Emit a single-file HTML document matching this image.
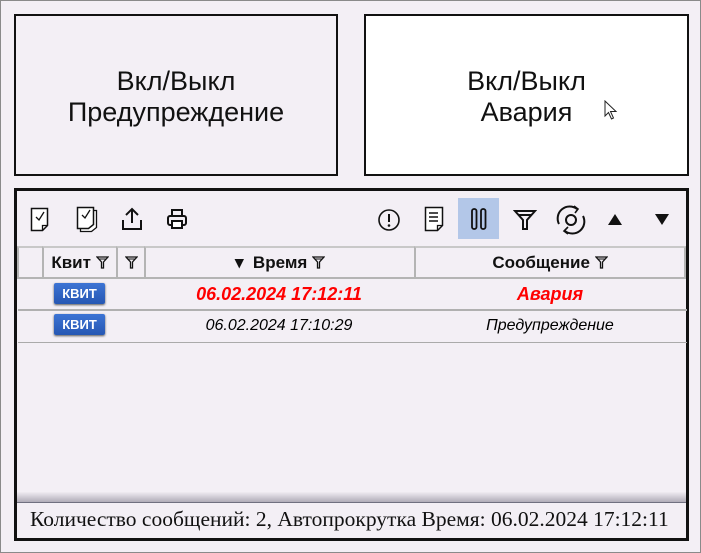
<!DOCTYPE html>
<html><head><meta charset="utf-8"><style>
*{box-sizing:border-box;margin:0;padding:0}
body{width:701px;height:553px;background:#f3eff5;position:relative;overflow:hidden;font-family:"Liberation Sans",sans-serif;border:1px solid #8a8a8a}
.btn{position:absolute;top:13px;height:162px;border:2px solid #111;display:flex;align-items:center;justify-content:center;text-align:center;font-size:27px;line-height:31px;color:#111;padding-top:4px}
#b1{left:13px;width:324px;background:#f3eff5}
#b2{left:363px;width:325px;background:#fff}
#panel{position:absolute;left:13px;top:187px;width:675px;height:353px;border:3px solid #111;background:#f3eff5}
.ic{position:absolute}
.hdr{position:absolute;top:55px;height:33px;border:2px solid #b4b4b4;border-top-color:#c8c8c8;background:#f3eff5;font-weight:bold;font-size:17px;display:flex;align-items:center;justify-content:center;color:#111}
.row{position:absolute;left:1px;width:669px;height:32px;border-bottom:2px solid #b0b0b0}
.kv{position:absolute;left:36px;width:51px;height:21px;background:linear-gradient(#3d74d4,#2657b3);border-radius:2px;color:#fff;font-size:13px;font-weight:bold;display:flex;align-items:center;justify-content:center;box-shadow:0 1px 2px #555}
.t{position:absolute;font-style:italic;font-size:18px;text-align:center}
</style></head><body>
<div class="btn" id="b1">Вкл/Выкл<br>Предупреждение</div>
<div class="btn" id="b2">Вкл/Выкл<br>Авария</div>
<svg style="position:absolute;left:603px;top:99px" width="14" height="20" viewBox="0 0 14 20"><path d="M1 1V16L4.5 12.5L7.5 19L9.5 18L6.5 11.5H12Z" fill="#fff" stroke="#222" stroke-width="1"/></svg>
<div id="panel">
<svg class="ic" style="left:13px;top:16px" width="20" height="26" viewBox="0 0 20 26"><path d="M1.5 1.5H17.5V18.5L12.5 23.5H1.5Z" fill="#fff" stroke="#111" stroke-width="1.5"/><path d="M12.5 23.5V18.5H17.5" fill="none" stroke="#111" stroke-width="1.3"/><path d="M6 10L9 13L14 5" fill="none" stroke="#111" stroke-width="1.3"/></svg>
<svg class="ic" style="left:59px;top:15px" width="24" height="27" viewBox="0 0 24 27"><path d="M4.5 4.5H20.5V21.5L15.5 25.5H4.5Z" fill="#fff" stroke="#111" stroke-width="1.3"/><path d="M1.5 1.5H17.5V18.5L12.5 22.5H1.5Z" fill="#fff" stroke="#111" stroke-width="1.5"/><path d="M6 9L9 12L14 4" fill="none" stroke="#111" stroke-width="1.3"/></svg>
<svg class="ic" style="left:104px;top:16px" width="22" height="24" viewBox="0 0 22 24"><path d="M11 2V16M5 8L11 2L17 8" fill="none" stroke="#111" stroke-width="2"/><path d="M2 13V22H20V13" fill="none" stroke="#111" stroke-width="2"/></svg>
<svg class="ic" style="left:149px;top:17px" width="22" height="22" viewBox="0 0 22 22"><rect x="6" y="2" width="10" height="6" fill="none" stroke="#111" stroke-width="2"/><rect x="2" y="8" width="18" height="9" rx="2" fill="none" stroke="#111" stroke-width="2"/><rect x="6" y="13" width="10" height="7" fill="#fff" stroke="#111" stroke-width="2"/></svg>
<svg class="ic" style="left:360px;top:17px" width="24" height="24" viewBox="0 0 24 24"><circle cx="12" cy="12" r="10" fill="none" stroke="#111" stroke-width="1.6"/><path d="M12 6V14" stroke="#111" stroke-width="2"/><circle cx="12" cy="17.5" r="1.3" fill="#111"/></svg>
<svg class="ic" style="left:407px;top:15px" width="22" height="27" viewBox="0 0 22 27"><path d="M1.5 1.5H18.5V19.5L13.5 24.5H1.5Z" fill="#fff" stroke="#111" stroke-width="1.5"/><path d="M13.5 24.5V19.5H18.5" fill="none" stroke="#111" stroke-width="1.3"/><path d="M5 7H14M5 11H14M5 15H14" stroke="#111" stroke-width="1.5"/></svg>
<div class="ic" style="left:441px;top:7px;width:41px;height:41px;background:#b3c7e8"></div>
<svg class="ic" style="left:453px;top:16px" width="18" height="24" viewBox="0 0 18 24"><rect x="2" y="2" width="4.5" height="20" rx="2" fill="none" stroke="#111" stroke-width="1.8"/><rect x="11" y="2" width="4.5" height="20" rx="2" fill="none" stroke="#111" stroke-width="1.8"/></svg>
<svg class="ic" style="left:496px;top:18px" width="24" height="22" viewBox="0 0 24 22"><path d="M2 2H22L14 11V20H10V11Z" fill="none" stroke="#111" stroke-width="2"/><path d="M5 6H19" stroke="#111" stroke-width="2"/></svg>
<svg class="ic" style="left:538px;top:13px" width="32" height="32" viewBox="0 0 32 32"><circle cx="16" cy="16" r="5" fill="none" stroke="#111" stroke-width="2"/><path d="M4 20A12 12 0 0 1 22 5M28 12A12 12 0 0 1 10 27" fill="none" stroke="#111" stroke-width="2"/><path d="M19 2L23 5L20 9M13 23L9 27L13 30" fill="none" stroke="#111" stroke-width="1.6"/></svg>
<svg class="ic" style="left:590px;top:21px" width="16" height="14"><path d="M1 13H15L8 2Z" fill="#111"/></svg>
<svg class="ic" style="left:637px;top:22px" width="16" height="14"><path d="M1 1H15L8 12Z" fill="#111"/></svg>
<div class="hdr" style="left:0px;width:27px"></div>
<div class="hdr" style="left:25px;width:76px">Квит&nbsp;<svg width="13" height="13" viewBox="0 0 13 13"><path d="M1 1H12L7.5 6V12H5.5V6Z" fill="none" stroke="#111" stroke-width="1.3"/><path d="M3 3H10" stroke="#111"/></svg></div>
<div class="hdr" style="left:99px;width:30px"><svg width="13" height="13" viewBox="0 0 13 13"><path d="M1 1H12L7.5 6V12H5.5V6Z" fill="none" stroke="#111" stroke-width="1.3"/><path d="M3 3H10" stroke="#111"/></svg></div>
<div class="hdr" style="left:127px;width:272px">▾&nbsp; Время&nbsp;<svg width="13" height="13" viewBox="0 0 13 13"><path d="M1 1H12L7.5 6V12H5.5V6Z" fill="none" stroke="#111" stroke-width="1.3"/><path d="M3 3H10" stroke="#111"/></svg></div>
<div class="hdr" style="left:397px;width:272px">Сообщение&nbsp;<svg width="13" height="13" viewBox="0 0 13 13"><path d="M1 1H12L7.5 6V12H5.5V6Z" fill="none" stroke="#111" stroke-width="1.3"/><path d="M3 3H10" stroke="#111"/></svg></div>
<div class="row" style="top:88px"><div class="kv" style="top:4px">КВИТ</div><div class="t" style="left:126px;width:270px;top:5px;color:#f00;font-weight:bold">06.02.2024 17:12:11</div><div class="t" style="left:396px;width:272px;top:5px;color:#f00;font-weight:bold">Авария</div></div>
<div class="row" style="top:120px;border-bottom:1px solid #aaa"><div class="kv" style="top:3px">КВИТ</div><div class="t" style="left:126px;width:270px;top:6px;font-size:16px">06.02.2024 17:10:29</div><div class="t" style="left:396px;width:272px;top:6px;font-size:16px">Предупреждение</div></div>
<div style="position:absolute;left:0;top:301px;width:669px;height:10px;background:linear-gradient(#f0ecf2,#b0acb8)"></div>
<div style="position:absolute;left:0;top:311px;width:669px;height:1px;background:#707080"></div>
<div style="position:absolute;left:13px;top:316px;font-family:'Liberation Serif',serif;font-size:21.5px;color:#111;white-space:nowrap">Количество сообщений: 2, Автопрокрутка Время: 06.02.2024 17:12:11</div>
</div>
</body></html>
